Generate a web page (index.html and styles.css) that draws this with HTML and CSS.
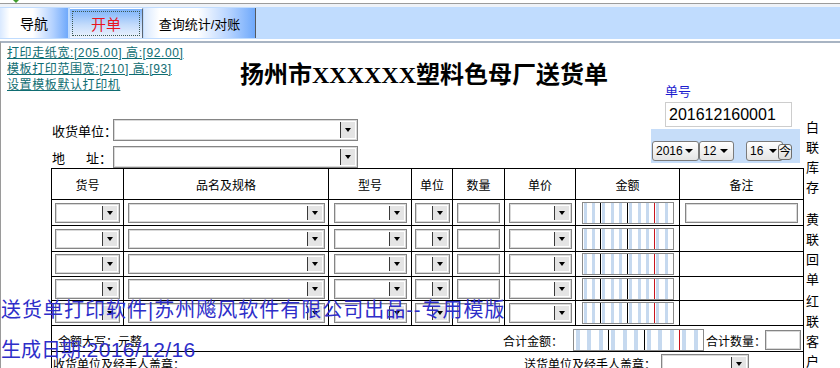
FILE: index.html
```html
<!DOCTYPE html>
<html lang="zh-CN">
<head>
    <meta charset="UTF-8">
    <title>送货单</title>
    <link rel="stylesheet" href="styles.css">
</head>
<body>
    <div class="topbar"><span class="grip"></span></div>
    <div class="tabbar">
        <div class="tab nav">导航</div>
        <div class="tab active"><span class="focus">开单</span></div>
        <div class="tab last">查询统计/对账</div>
    </div>

    <div class="page">
        <div class="sheet">
            <div class="head">
                <div class="head-main">
                    <div class="intro">
                        <div class="links">
                            <a href="#">打印走纸宽:[205.00] 高:[92.00]</a>
                            <a href="#">模板打印范围宽:[210] 高:[93]</a>
                            <a href="#">设置模板默认打印机</a>
                        </div>
                        <h1 class="title">扬州市XXXXXX塑料色母厂送货单</h1>
                    </div>
                    <div class="fields">
                        <div class="field">
                            <label>收货单位：</label>
                            <div class="combo wide"><span class="drop"></span></div>
                        </div>
                        <div class="field">
                            <label>地<i class="sp"></i>址：</label>
                            <div class="combo wide"><span class="drop"></span></div>
                        </div>
                    </div>
                </div>
                <div class="head-side">
                    <div class="no-label">单号</div>
                    <div class="no-box">201612160001</div>
                    <div class="datebar">
                        <span class="pick y">2016</span>
                        <span class="pick m">12</span>
                        <span class="pick d">16</span>
                        <span class="today">今</span>
                    </div>
                </div>
            </div>

            <table class="bill">
                <colgroup>
                    <col style="width:72px"><col style="width:205px"><col style="width:83px"><col style="width:41px">
                    <col style="width:52px"><col style="width:71px"><col style="width:104px"><col style="width:124px">
                </colgroup>
                <tr class="th">
                    <td>货号</td><td>品名及规格</td><td>型号</td><td>单位</td>
                    <td>数量</td><td>单价</td><td>金额</td><td>备注</td>
                </tr>
                <tr class="r1">
                    <td><div class="combo c1"><span class="drop"></span></div></td>
                    <td><div class="combo c2"><span class="drop"></span></div></td>
                    <td><div class="combo c3"><span class="drop"></span></div></td>
                    <td><div class="combo c4"><span class="drop"></span></div></td>
                    <td><div class="box c5"></div></td>
                    <td><div class="combo c6"><span class="drop"></span></div></td>
                    <td><div class="money"><i></i><i class="k"></i><i></i><i></i><i class="k"></i><i></i><i></i><i class="r"></i><i></i><i></i></div></td>
                    <td><div class="box c8"></div></td>
                </tr>
                <tr class="r2">
                    <td><div class="combo c1"><span class="drop"></span></div></td>
                    <td><div class="combo c2"><span class="drop"></span></div></td>
                    <td><div class="combo c3"><span class="drop"></span></div></td>
                    <td><div class="combo c4"><span class="drop"></span></div></td>
                    <td><div class="box c5"></div></td>
                    <td><div class="combo c6"><span class="drop"></span></div></td>
                    <td><div class="money"><i></i><i class="k"></i><i></i><i></i><i class="k"></i><i></i><i></i><i class="r"></i><i></i><i></i></div></td>
                    <td></td>
                </tr>
                <tr class="r3">
                    <td><div class="combo c1"><span class="drop"></span></div></td>
                    <td><div class="combo c2"><span class="drop"></span></div></td>
                    <td><div class="combo c3"><span class="drop"></span></div></td>
                    <td><div class="combo c4"><span class="drop"></span></div></td>
                    <td><div class="box c5"></div></td>
                    <td><div class="combo c6"><span class="drop"></span></div></td>
                    <td><div class="money"><i></i><i class="k"></i><i></i><i></i><i class="k"></i><i></i><i></i><i class="r"></i><i></i><i></i></div></td>
                    <td></td>
                </tr>
                <tr class="r4">
                    <td><div class="combo c1"><span class="drop"></span></div></td>
                    <td><div class="combo c2"><span class="drop"></span></div></td>
                    <td><div class="combo c3"><span class="drop"></span></div></td>
                    <td><div class="combo c4"><span class="drop"></span></div></td>
                    <td><div class="box c5"></div></td>
                    <td><div class="combo c6"><span class="drop"></span></div></td>
                    <td><div class="money"><i></i><i class="k"></i><i></i><i></i><i class="k"></i><i></i><i></i><i class="r"></i><i></i><i></i></div></td>
                    <td></td>
                </tr>
                <tr class="r5">
                    <td><div class="combo c1"><span class="drop"></span></div></td>
                    <td><div class="combo c2"><span class="drop"></span></div></td>
                    <td><div class="combo c3"><span class="drop"></span></div></td>
                    <td><div class="combo c4"><span class="drop"></span></div></td>
                    <td><div class="box c5"></div></td>
                    <td><div class="combo c6"><span class="drop"></span></div></td>
                    <td><div class="money"><i></i><i class="k"></i><i></i><i></i><i class="k"></i><i></i><i></i><i class="r"></i><i></i><i></i></div></td>
                    <td></td>
                </tr>
                <tr class="sum-row">
                    <td colspan="8">
                        <div class="sum">
                            <span>金额大写：元整</span>
                            <div class="sum-right">
                                <span>合计金额：</span>
                                <div class="money big"><i></i><i></i><i class="k"></i><i></i><i></i><i class="k"></i><i></i><i></i><i class="r"></i><i></i><i></i></div>
                                <span class="qty-label">合计数量：</span>
                                <div class="box qty"></div>
                            </div>
                        </div>
                    </td>
                </tr>
                <tr class="foot-row">
                    <td colspan="8">
                        <div class="foot">
                            <span class="sign">收货单位及经手人盖章：</span>
                            <div class="foot-right">
                                <span class="sign">送货单位及经手人盖章：</span>
                                <div class="combo sender"><span class="drop"></span></div>
                            </div>
                        </div>
                    </td>
                </tr>
            </table>
        </div>

        <div class="copies">
            <div class="g g1">白联库存</div>
            <div class="g g2">黄联回单</div>
            <div class="g g3">红联客户</div>
        </div>

        <div class="stamp s1">送货单打印软件|苏州飚风软件有限公司出品--专用模版</div>
        <div class="stamp s2">生成日期:<span class="num">2016/12/16</span></div>
    </div>
</body>
</html>
```

FILE: styles.css
```css
body {
    margin: 0;
    width: 840px;
    height: 368px;
    overflow: hidden;
    background-color: #fff;
    color: #000;
    font-family: "Liberation Sans", "Noto Sans CJK SC", sans-serif;
    font-size: 12px;
}

/* top strip + tabs */
.topbar {
    height: 3px;
    border-bottom: 1px solid #9c9c9c;
}

.grip {
    display: block;
    width: 0;
    margin-left: 13px;
    border-left: 3px solid transparent;
    border-right: 3px solid transparent;
    border-top: 3px solid #3f9b2c;
}

.tabbar {
    display: flex;
    height: 32px;
    border-top: 3px solid #eef2f8;
    border-bottom: 2px solid #fff;
    background-color: #c0dcfe;
}

.tab {
    display: flex;
    align-items: center;
    justify-content: center;
    height: 30px;
    margin-top: 1px;
    font-size: 14px;
    background: linear-gradient(90deg, #d9e9ff 0%, #fff 14%, #fff 48%, #b2d1ff 78%, #6fa9fb 100%);
}

.tab.nav {
    width: 68px;
}

.tab.active {
    width: 73px;
    margin-left: 2px;
    padding: 2px;
    box-sizing: border-box;
    border-top: 1px solid #fff;
    border-right: 1px solid #5b6470;
    color: #e8141e;
    font-size: 15px;
    background: linear-gradient(#7cb2fa, #c4dcfb 55%, #eef4fe);
}

.tab.active .focus {
    flex: 1;
    align-self: stretch;
    display: flex;
    align-items: center;
    justify-content: center;
    border: 1px dotted #3d5a52;
}

.tab.last {
    width: 111px;
    margin-left: 1px;
    border-right: 1px solid #55595e;
    font-size: 13px;
}

/* page */
.page {
    position: relative;
    display: flex;
    padding-top: 1px;
    border-top: 2px solid #a8b4c3;
    border-left: 1px solid #9a9a9a;
}

.sheet {
    width: 802px;
}

.head {
    display: grid;
    grid-template-columns: 650px 152px;
}

.intro {
    display: flex;
}

.links {
    width: 233px;
    padding: 1px 0 0 6px;
}

.links a {
    display: block;
    line-height: 16px;
    color: #0f6d72;
    letter-spacing: 0.6px;
}

.title {
    margin: 16px 0 0 0;
    font-family: "Liberation Serif", "Noto Sans CJK SC", serif;
    font-size: 24px;
    line-height: 30px;
    font-weight: bold;
}

.fields {
    display: flex;
    flex-direction: column;
    gap: 5px;
    margin-top: 26px;
    padding-left: 51px;
}

.field {
    display: flex;
    align-items: center;
    height: 22px;
}

.field label {
    width: 61px;
    font-size: 13px;
    white-space: nowrap;
}

.field .sp {
    display: inline-block;
    width: 21px;
}

/* combo boxes */
.combo {
    display: flex;
    justify-content: flex-end;
    box-sizing: border-box;
    height: 20px;
    border: 1px solid #858585;
    box-shadow: inset 0 0 0 1px #d9d9d9;
    background-color: #fff;
}

.combo .drop {
    display: flex;
    align-items: center;
    justify-content: center;
    width: 14px;
    margin: 2px 2px 2px 0;
    border-left: 1px solid #3a3a3a;
    background-color: #e4e4e4;
}

.combo .drop::after {
    content: '';
    border-left: 3px solid transparent;
    border-right: 3px solid transparent;
    border-top: 4px solid #000;
}

.combo.wide {
    width: 245px;
    height: 22px;
}

.box {
    box-sizing: border-box;
    height: 20px;
    border: 1px solid #858585;
    box-shadow: inset 0 0 0 1px #d9d9d9;
}

.c1 { width: 65px; }
.c2 { width: 197px; }
.c3 { width: 73px; }
.c4 { width: 35px; }
.c5 { width: 43px; }
.c6 { width: 63px; }
.c8 { width: 113px; }

/* order number + date */
.head-side {
    padding-top: 40px;
}

.no-label {
    margin-left: 14px;
    line-height: 16px;
    font-size: 13px;
    color: #1d1dcf;
}

.no-box {
    box-sizing: border-box;
    width: 127px;
    height: 25px;
    margin: 2px 0 0 14px;
    padding-left: 3px;
    border: 1px solid #cdcdcd;
    font-size: 16px;
    line-height: 23px;
}

.datebar {
    display: flex;
    align-items: flex-start;
    box-sizing: border-box;
    width: 149px;
    height: 34px;
    margin-top: 2px;
    padding: 12px 0 0 1px;
    background-color: #c6ddf9;
}

.pick {
    display: flex;
    align-items: center;
    justify-content: space-between;
    box-sizing: border-box;
    height: 20px;
    padding: 0 5px 0 3px;
    border: 1px solid #7b7b7b;
    border-radius: 3px;
    background: linear-gradient(#fff, #e4e4e4);
    font-size: 12px;
}

.pick::after {
    content: '';
    border-left: 4px solid transparent;
    border-right: 4px solid transparent;
    border-top: 4px solid #000;
}

.pick.y { width: 47px; }
.pick.m { width: 35px; }
.pick.d { width: 37px; margin-left: 12px; }

.today {
    position: relative;
    box-sizing: border-box;
    width: 14px;
    height: 16px;
    margin: 3px 0 0 -5px;
    border: 1px solid #6d6d6d;
    border-radius: 3px;
    background: linear-gradient(#fafafa, #dcdcdc);
    font-size: 12px;
    line-height: 14px;
    text-align: center;
}

/* the bill table */
.bill {
    margin-left: 50px;
    width: 752px;
    table-layout: fixed;
    border-collapse: collapse;
}

.bill td {
    padding: 0;
    border: 1px solid #000;
    text-align: center;
    vertical-align: middle;
}

.bill td > div {
    margin: 0 auto;
}

.bill .th { height: 31px; }
.bill .r1, .bill .r2 { height: 26px; }
.bill .r3, .bill .r5 { height: 25px; }
.bill .r4 { height: 24px; }
.bill .sum-row { height: 24px; }

.money {
    display: flex;
    width: 90px;
    height: 20px;
    border: 1px solid #8a8a8a;
}

.money i {
    flex: 1;
    background: linear-gradient(90deg, #fff 0 1px, #c6d9ef 1px 4px, #fff 4px);
}

.money i.k { border-right: 1px solid #000; }
.money i.r { border-right: 1px solid #c8141e; }

.money.big {
    width: 129px;
    margin-left: 10px;
}

.money.big i {
    background: linear-gradient(90deg, #fff 0 2px, #c6d9ef 2px 6px, #fff 6px);
}

.sum {
    display: flex;
    align-items: center;
    padding: 3px 2px 0 6px;
    text-align: left;
}

.sum-right {
    display: flex;
    align-items: center;
    margin-left: auto;
}

.qty-label {
    margin-left: 2px;
}

.box.qty {
    width: 36px;
    margin-left: -1px;
}

.foot-row td {
    vertical-align: top;
    border-bottom: none;
}

.foot {
    display: flex;
    align-items: flex-start;
    height: 30px;
    padding: 2px 54px 0 1px;
    text-align: left;
}

.foot .sign {
    margin-top: 3px;
    line-height: 16px;
}

.foot-right {
    display: flex;
    margin-left: auto;
}

.combo.sender {
    width: 88px;
    margin-left: 5px;
}

/* copy colours on the right */
.copies {
    width: 13px;
    padding: 74px 0 0 3px;
    font-size: 13px;
    line-height: 20px;
}

.g2 { margin-top: 12px; }
.g3 { margin-top: 2px; }

/* watermark overlay */
.stamp {
    position: absolute;
    left: 0;
    font-size: 20px;
    line-height: 24px;
    color: #2e2ec9;
    white-space: nowrap;
}

.s1 {
    top: 255px;
    letter-spacing: 1px;
}

.s2 {
    top: 295px;
}

.s2 .num {
    font-size: 21px;
    letter-spacing: 0.4px;
}
```
